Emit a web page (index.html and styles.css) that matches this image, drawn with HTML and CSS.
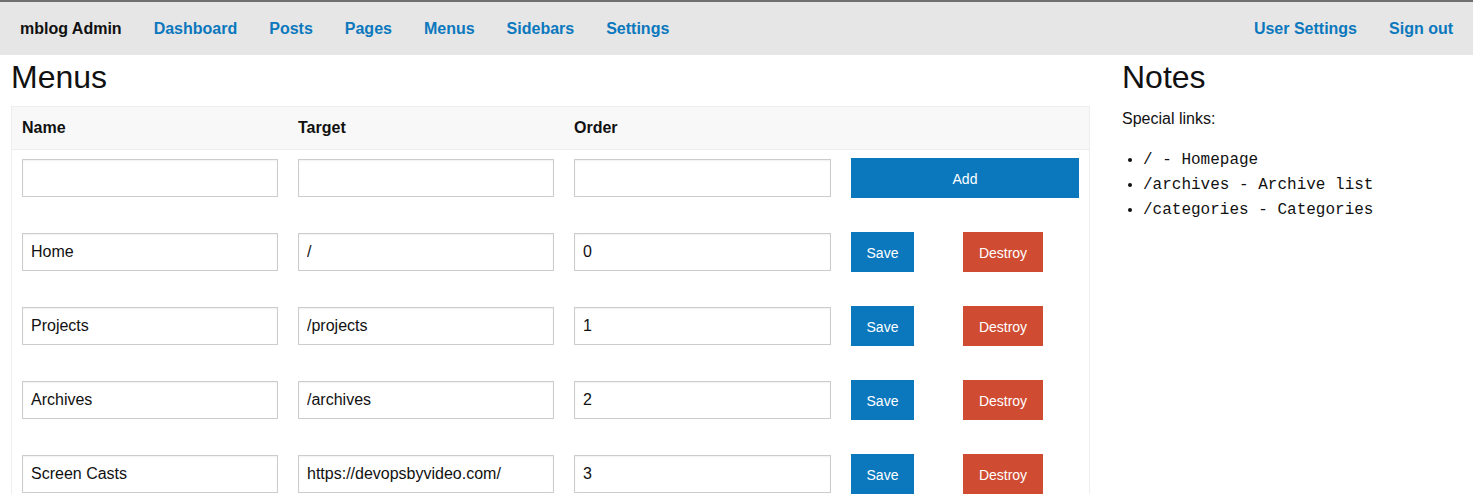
FILE: index.html
```html
<!DOCTYPE html>
<html>
<head>
<meta charset="utf-8">
<title>mblog Admin - Menus</title>
<link rel="stylesheet" href="styles.css">
</head>
<body>
<nav class="navbar">
  <div class="nav-left">
    <a class="brand" href="#">mblog Admin</a>
    <a class="nav-link" href="#">Dashboard</a>
    <a class="nav-link" href="#">Posts</a>
    <a class="nav-link" href="#">Pages</a>
    <a class="nav-link" href="#">Menus</a>
    <a class="nav-link" href="#">Sidebars</a>
    <a class="nav-link" href="#">Settings</a>
  </div>
  <div class="nav-right">
    <a class="nav-link" href="#">User Settings</a>
    <a class="nav-link last" href="#">Sign out</a>
  </div>
</nav>
<div class="page">
  <main class="main">
    <h1 class="title">Menus</h1>
    <table class="menu-table">
      <thead>
        <tr><th>Name</th><th>Target</th><th>Order</th><th></th></tr>
      </thead>
      <tbody>
        <tr>
          <td><input class="field" type="text" value=""></td>
          <td><input class="field" type="text" value=""></td>
          <td><input class="field" type="text" value=""></td>
          <td><button class="btn btn-blue btn-full">Add</button></td>
        </tr>
        <tr>
          <td><input class="field" type="text" value="Home"></td>
          <td><input class="field" type="text" value="/"></td>
          <td><input class="field" type="text" value="0"></td>
          <td><div class="actions"><button class="btn btn-blue btn-save">Save</button><button class="btn btn-red btn-destroy">Destroy</button></div></td>
        </tr>
        <tr>
          <td><input class="field" type="text" value="Projects"></td>
          <td><input class="field" type="text" value="/projects"></td>
          <td><input class="field" type="text" value="1"></td>
          <td><div class="actions"><button class="btn btn-blue btn-save">Save</button><button class="btn btn-red btn-destroy">Destroy</button></div></td>
        </tr>
        <tr>
          <td><input class="field" type="text" value="Archives"></td>
          <td><input class="field" type="text" value="/archives"></td>
          <td><input class="field" type="text" value="2"></td>
          <td><div class="actions"><button class="btn btn-blue btn-save">Save</button><button class="btn btn-red btn-destroy">Destroy</button></div></td>
        </tr>
        <tr>
          <td><input class="field" type="text" value="Screen Casts"></td>
          <td><input class="field" type="text" value="https://devopsbyvideo.com/"></td>
          <td><input class="field" type="text" value="3"></td>
          <td><div class="actions"><button class="btn btn-blue btn-save">Save</button><button class="btn btn-red btn-destroy">Destroy</button></div></td>
        </tr>
      </tbody>
    </table>
  </main>
  <aside class="notes">
    <h2 class="title">Notes</h2>
    <p class="notes-text">Special links:</p>
    <ul class="notes-list">
      <li>/ - Homepage</li>
      <li>/archives - Archive list</li>
      <li>/categories - Categories</li>
    </ul>
  </aside>
</div>
</body>
</html>
```

FILE: styles.css
```css
html, body {
  margin: 0;
  padding: 0;
  background: #ffffff;
  font-family: "Liberation Sans", Arial, Helvetica, sans-serif;
  font-size: 16px;
  color: #111111;
}

.navbar {
  display: flex;
  justify-content: space-between;
  align-items: center;
  height: 53px;
  background: #e6e6e6;
  border-top: 2px solid #6f6f6f;
  padding: 0 4px;
}

.nav-left, .nav-right {
  display: flex;
  align-items: center;
}

.brand {
  font-weight: bold;
  color: #111111;
  text-decoration: none;
  padding: 0 16px;
}

.nav-link {
  font-weight: bold;
  color: #0b78bd;
  text-decoration: none;
  padding: 0 16px;
}

.page {
  display: grid;
  grid-template-columns: 1079px 1fr;
  column-gap: 32px;
  padding: 0 11px;
}

.title {
  font-size: 32px;
  font-weight: normal;
  margin: 6px 0 13px 0;
  line-height: 32px;
  color: #111111;
}

.menu-table {
  width: 100%;
  border-collapse: collapse;
  table-layout: fixed;
  border: 1px solid #eeeeee;
}

.menu-table th:nth-child(1),
.menu-table th:nth-child(2) {
  width: 256px;
}

.menu-table th:nth-child(3) {
  width: 257px;
}

.menu-table th {
  background: #f8f8f8;
  text-align: left;
  font-weight: bold;
  font-size: 16px;
  height: 42px;
  padding: 0 10px;
  border-bottom: 1px solid #eeeeee;
}

.menu-table td {
  padding: 8px 10px 26px 10px;
  vertical-align: top;
}

.field {
  display: block;
  box-sizing: border-box;
  width: 100%;
  height: 38px;
  margin-top: 1px;
  padding: 0 8px;
  border: 1px solid #cccccc;
  box-shadow: inset 0 1px 2px rgba(0, 0, 0, 0.06);
  font-family: "Liberation Sans", Arial, Helvetica, sans-serif;
  font-size: 16px;
  color: #111111;
  background: #ffffff;
  outline: none;
}

.actions {
  display: flex;
  gap: 49px;
}

.btn {
  height: 40px;
  border: none;
  padding: 1px 0 0 0;
  color: #ffffff;
  font-family: "Liberation Sans", Arial, Helvetica, sans-serif;
  font-size: 14px;
  text-align: center;
  cursor: pointer;
}

.btn-save {
  width: 63px;
}

.btn-destroy {
  width: 80px;
}

.btn-full {
  width: 100%;
}

.btn-blue {
  background: #0b78be;
}

.btn-red {
  background: #cf4b31;
}

.notes-text {
  margin: 0 0 19px 0;
  padding-top: 3px;
  line-height: 20px;
}

.notes-list {
  margin: 0;
  padding-left: 21px;
}

.notes-list li {
  font-family: "Liberation Mono", "Courier New", monospace;
  font-size: 16px;
  line-height: 25px;
}
```
